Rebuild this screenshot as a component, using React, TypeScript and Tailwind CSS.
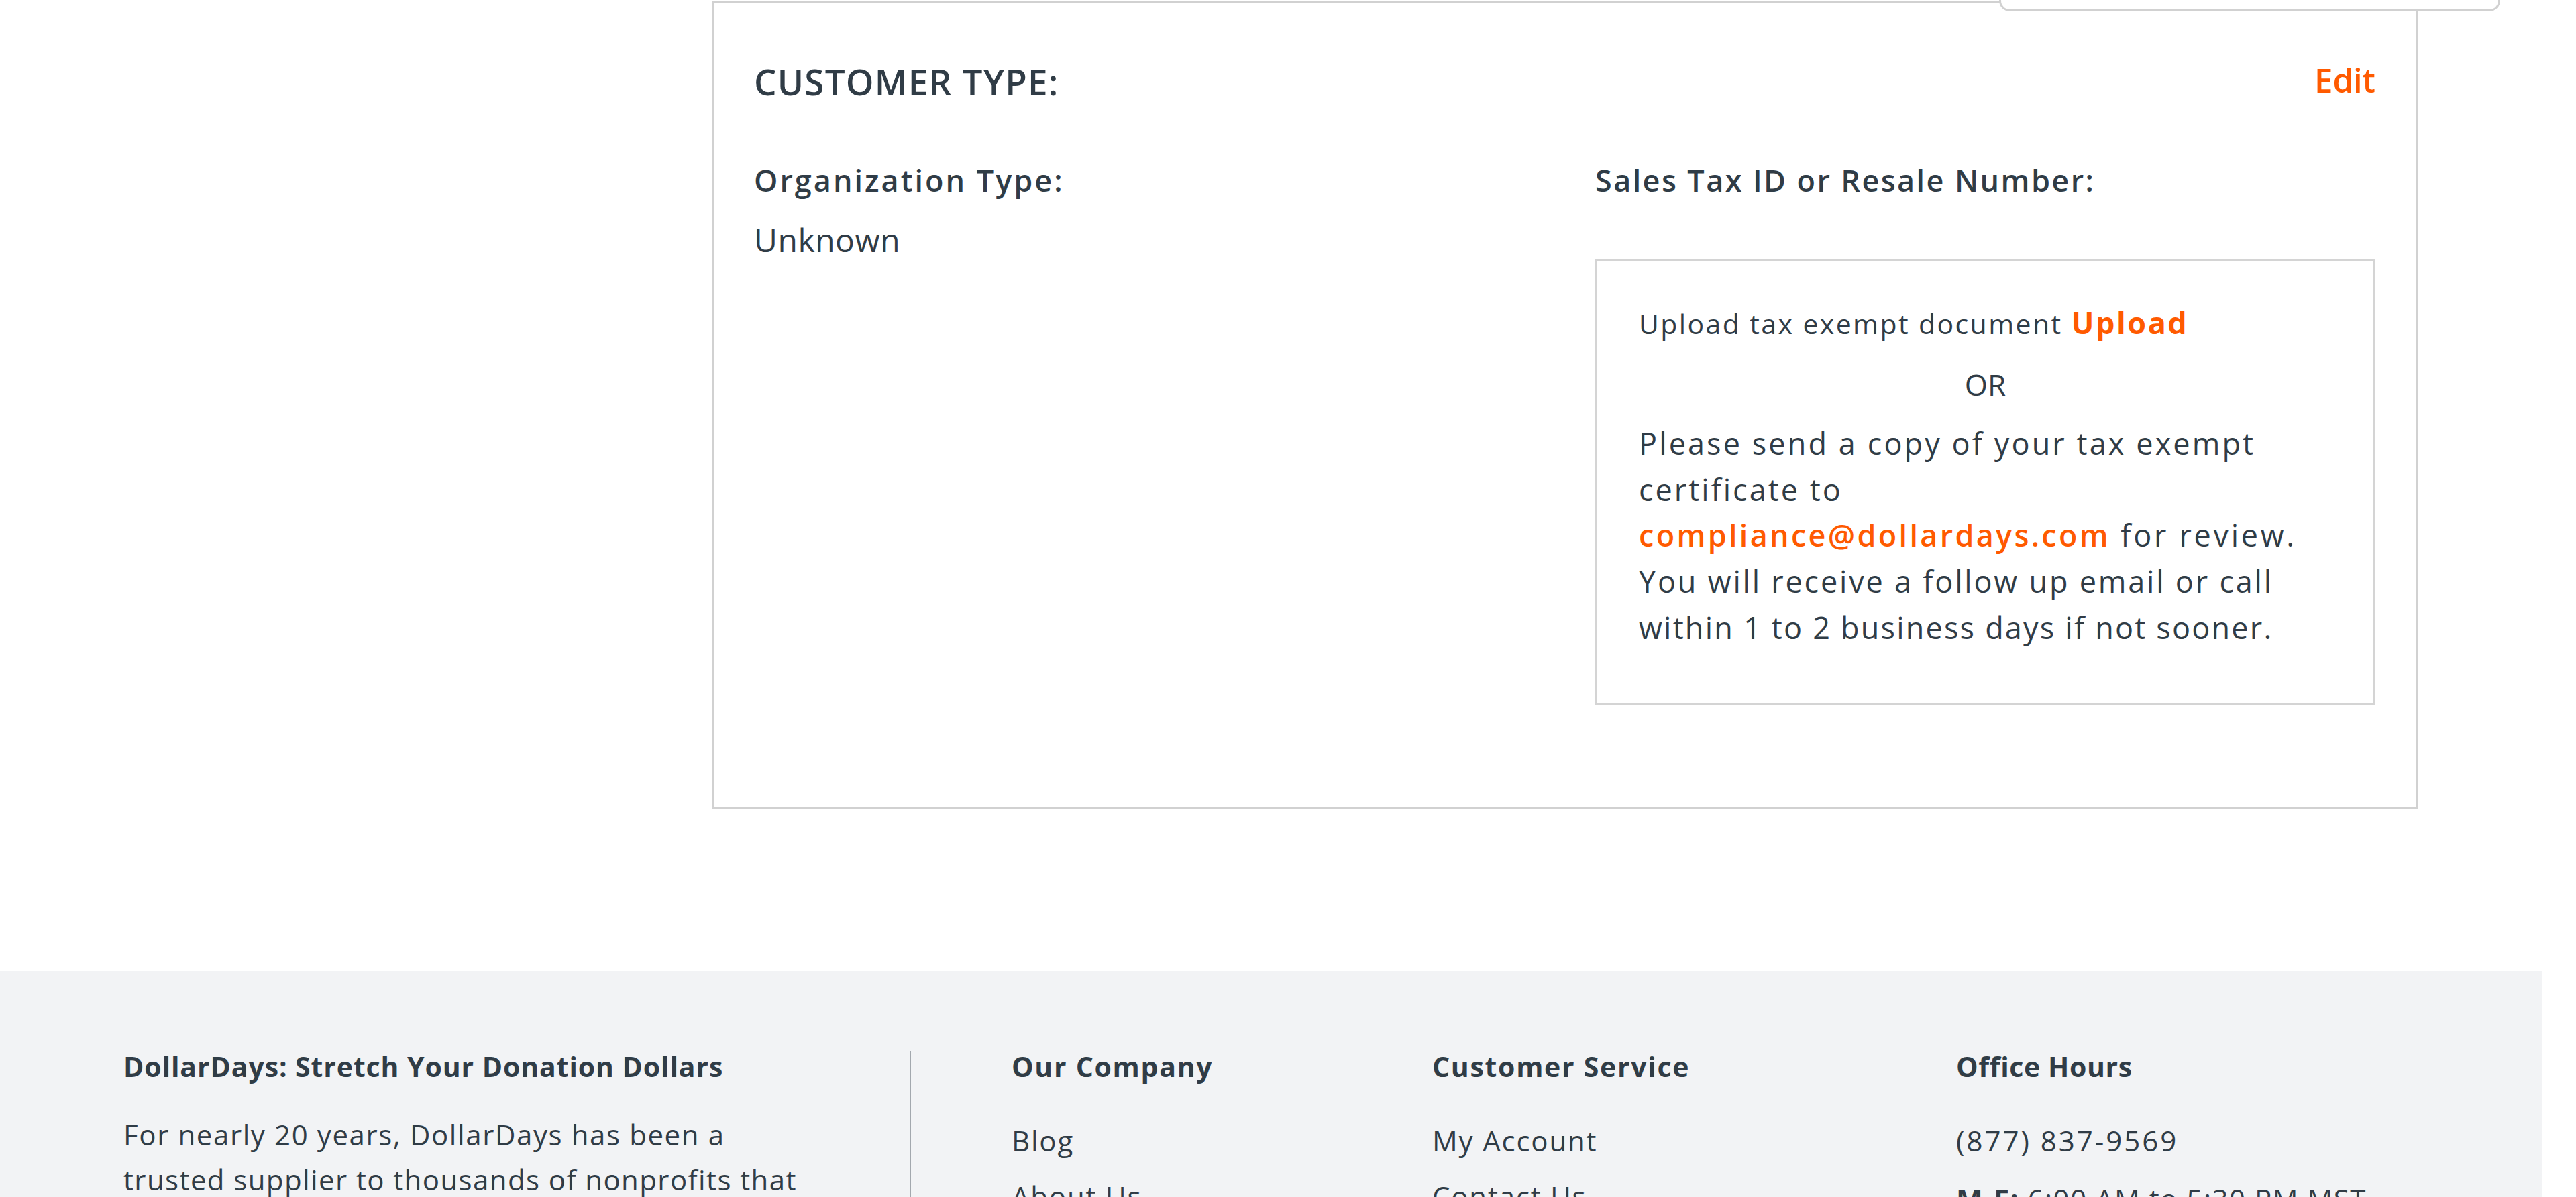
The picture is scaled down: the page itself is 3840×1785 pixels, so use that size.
import React from "react";

const FONT = { fontFamily: '"Open Sans", "Noto Sans", sans-serif' };

export default function App() {
  return (
    <div className="relative w-[3840px] h-[1785px] overflow-hidden bg-white text-[#303c46]" style={FONT}>
      <div className="w-[3789px]">
        {/* main area */}
        <div className="relative pt-[1px] h-[1448px]">
          <div className="ml-[1062px] w-[2543px] border-[3px] border-[#d1d1d1] bg-white px-[59px] pt-[88px] pb-[152px]">
            <div className="flex items-start justify-between">
              <h2 className="text-[53px] leading-[60px] font-semibold tracking-[1.2px]">CUSTOMER TYPE:</h2>
              <a className="text-[49px] leading-[50px] font-semibold text-[#ff5a00] mr-[2px] mt-[2px]">Edit</a>
            </div>
            <div className="flex mt-[90px]">
              <div className="w-[1254px]">
                <div className="text-[45px] leading-[54px] font-semibold tracking-[3px]">Organization Type:</div>
                <div className="mt-[32px] text-[48px] leading-[60px] tracking-[0.5px]">Unknown</div>
              </div>
              <div className="w-[1163px]">
                <div className="text-[45px] leading-[54px] font-semibold tracking-[2.4px]">Sales Tax ID or Resale Number:</div>
                <div className="mt-[90px] h-[666px] border-[3px] border-[#d4d4d4] px-[62px] pt-[65px]">
                  <div className="text-[41px] leading-[56px] tracking-[2.4px]">
                    Upload tax exempt document{" "}
                    <a className="text-[45px] leading-[40px] font-bold tracking-[2.5px] text-[#ff5a00]">Upload</a>
                  </div>
                  <div className="mt-[33px] text-center text-[44px] leading-[60px]">OR</div>
                  <p className="mt-[24px] text-[45px] leading-[68.7px] whitespace-nowrap">
                    <span className="tracking-[3.1px]">Please send a copy of your tax exempt</span>
                    <br />
                    <span className="tracking-[3px]">certificate to</span>
                    <br />
                    <a className="font-semibold tracking-[3.3px] text-[#ff5a00]">compliance@dollardays.com</a>
                    <span className="tracking-[3.7px]"> for review.</span>
                    <br />
                    <span className="tracking-[2.8px]">You will receive a follow up email or call</span>
                    <br />
                    <span className="tracking-[2.2px]">within 1 to 2 business days if not sooner.</span>
                  </p>
                </div>
              </div>
            </div>
          </div>
          {/* overlapping dropdown edge */}
          <div className="absolute left-[2980px] top-[-40px] w-[747px] h-[57px] bg-white border-[3px] border-[#d1d1d1] rounded-b-[16px]" />
        </div>

        {/* footer */}
        <footer className="bg-[#f2f3f5] h-[400px] pt-[117px]">
          <div className="flex">
            <div className="ml-[184px] w-[1172px]">
              <h3 className="text-[41px] leading-[50px] font-bold tracking-[0.9px]">DollarDays: Stretch Your Donation Dollars</h3>
              <p className="mt-[43px] text-[42px] leading-[67px] whitespace-nowrap">
                <span className="tracking-[1.6px]">For nearly 20 years, DollarDays has been a</span>
                <br />
                <span className="tracking-[1.4px]">trusted supplier to thousands of nonprofits that</span>
                <br />
                <span className="tracking-[1.5px]">serve their communities every day.</span>
              </p>
            </div>
            <div className="w-[2px] h-[400px] mt-[3px] bg-[#a3a8ae]" />
            <div className="ml-[150px] w-[627px]">
              <h3 className="text-[41px] leading-[50px] font-bold tracking-[1.7px]">Our Company</h3>
              <ul className="mt-[52px] text-[42px] leading-[67px] tracking-[1.8px] space-y-[16px]">
                <li>Blog</li>
                <li>About Us</li>
                <li>Careers</li>
              </ul>
            </div>
            <div className="w-[781px]">
              <h3 className="text-[41px] leading-[50px] font-bold tracking-[1.7px]">Customer Service</h3>
              <ul className="mt-[52px] text-[42px] leading-[67px] tracking-[1.8px] space-y-[16px]">
                <li>My Account</li>
                <li>Contact Us</li>
                <li>Shipping</li>
              </ul>
            </div>
            <div className="w-[873px]">
              <h3 className="text-[41px] leading-[50px] font-bold tracking-[0.6px]">Office Hours</h3>
              <ul className="mt-[52px] text-[42px] leading-[67px] tracking-[3px] space-y-[20px] whitespace-nowrap">
                <li>(877) 837-9569</li>
                <li className="tracking-[1.5px]">
                  <span className="font-bold">M-F:</span> 6:00 AM to 5:30 PM MST
                </li>
              </ul>
            </div>
          </div>
        </footer>
      </div>
    </div>
  );
}
